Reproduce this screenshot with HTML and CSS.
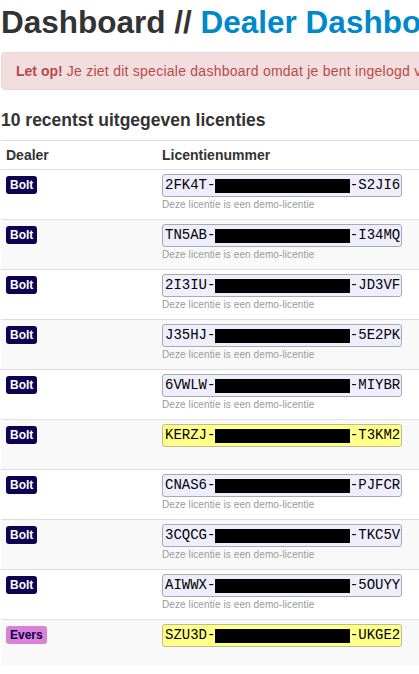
FILE: index.html
```html
<!DOCTYPE html>
<html lang="nl">
  <head>
    <meta charset="UTF-8" />
    <meta name="viewport" content="width=device-width, initial-scale=1.0" />
    <title>Dealer Dashboard</title>
    <link rel="stylesheet" href="styles.css">
  </head>
  <body>
    <div class="container">
      <h2 class="page-title">Dashboard // <span class="sub">Dealer Dashboard</span></h2>

      <div class="alert alert-error">
        <strong>Let op!</strong> Je ziet dit speciale dashboard omdat je bent ingelogd vanuit een dealeraccount.
      </div>

      <h4>10 recentst uitgegeven licenties</h4>

      <table class="table">
        <tr>
          <th class="col-dealer">Dealer</th>
          <th>Licentienummer</th>
        </tr>
        <tr>
          <td><span class="label label-bolt">Bolt</span></td>
          <td>
            <div class="license">2FK4T-<span class="redacted"></span>-S2JI6</div>
            <div class="help">Deze licentie is een demo-licentie</div>
          </td>
        </tr>
        <tr>
          <td><span class="label label-bolt">Bolt</span></td>
          <td>
            <div class="license">TN5AB-<span class="redacted"></span>-I34MQ</div>
            <div class="help">Deze licentie is een demo-licentie</div>
          </td>
        </tr>
        <tr>
          <td><span class="label label-bolt">Bolt</span></td>
          <td>
            <div class="license">2I3IU-<span class="redacted"></span>-JD3VF</div>
            <div class="help">Deze licentie is een demo-licentie</div>
          </td>
        </tr>
        <tr>
          <td><span class="label label-bolt">Bolt</span></td>
          <td>
            <div class="license">J35HJ-<span class="redacted"></span>-5E2PK</div>
            <div class="help">Deze licentie is een demo-licentie</div>
          </td>
        </tr>
        <tr>
          <td><span class="label label-bolt">Bolt</span></td>
          <td>
            <div class="license">6VWLW-<span class="redacted"></span>-MIYBR</div>
            <div class="help">Deze licentie is een demo-licentie</div>
          </td>
        </tr>
        <tr>
          <td><span class="label label-bolt">Bolt</span></td>
          <td>
            <div class="license license-full">KERZJ-<span class="redacted"></span>-T3KM2</div>
            <div class="help"></div>
          </td>
        </tr>
        <tr>
          <td><span class="label label-bolt">Bolt</span></td>
          <td>
            <div class="license">CNAS6-<span class="redacted"></span>-PJFCR</div>
            <div class="help">Deze licentie is een demo-licentie</div>
          </td>
        </tr>
        <tr>
          <td><span class="label label-bolt">Bolt</span></td>
          <td>
            <div class="license">3CQCG-<span class="redacted"></span>-TKC5V</div>
            <div class="help">Deze licentie is een demo-licentie</div>
          </td>
        </tr>
        <tr>
          <td><span class="label label-bolt">Bolt</span></td>
          <td>
            <div class="license">AIWWX-<span class="redacted"></span>-5OUYY</div>
            <div class="help">Deze licentie is een demo-licentie</div>
          </td>
        </tr>
        <tr>
          <td><span class="label label-evers">Evers</span></td>
          <td>
            <div class="license license-full">SZU3D-<span class="redacted"></span>-UKGE2</div>
            <div class="help help-last"></div>
          </td>
        </tr>
      </table>
    </div>
  </body>
</html>
```

FILE: styles.css
```css
html {
  overflow: hidden;
}
body {
  margin: 0;
  font-family: "Liberation Sans", Arial, sans-serif;
  font-size: 14px;
  line-height: 20px;
  color: #333333;
  background: #ffffff;
}
.container {
  width: 940px;
  padding: 2px 0 0 1px;
}
.page-title {
  margin: 0 0 10px;
  font-size: 31.5px;
  line-height: 40px;
  font-weight: bold;
  white-space: nowrap;
}
.page-title .sub {
  color: #0088cc;
}
.alert {
  padding: 8px 35px 8px 14px;
  margin-bottom: 20px;
  border: 1px solid #eed3d7;
  border-radius: 4px;
  white-space: nowrap;
  letter-spacing: 0.25px;
}
.alert strong {
  letter-spacing: 0;
}
.alert-error {
  background-color: #f2dede;
  color: #b94a48;
}
h4 {
  margin: 10px 0;
  font-size: 17.5px;
  line-height: 20px;
  font-weight: bold;
}
.table {
  width: 100%;
  border-collapse: collapse;
  border-spacing: 0;
}
.table th,
.table td {
  padding: 4px 5px;
  text-align: left;
  vertical-align: top;
  border-top: 1px solid #dddddd;
}
.table tr:nth-child(odd) td {
  background-color: #f9f9f9;
}
.col-dealer {
  width: 146px;
}
.label {
  display: inline-block;
  padding: 3px 4px;
  font-size: 12px;
  line-height: 12px;
  font-weight: bold;
  border-radius: 3px;
}
.label-bolt {
  background: #0e0052;
  color: #ffffff;
}
.label-evers {
  background: #d982d6;
  color: #0e0052;
}
.license {
  box-sizing: border-box;
  width: 240px;
  height: 23px;
  padding: 0 2px;
  border: 1px solid #a9a9b4;
  border-radius: 3px;
  background: #eeeefc;
  color: #000000;
  font-family: "Liberation Mono", "Courier New", monospace;
  font-size: 14px;
  line-height: 21px;
  white-space: nowrap;
}
.license-full {
  background: #ffff88;
  border-color: #bcbc94;
}
.redacted {
  display: inline-block;
  width: 16ch;
  height: 14px;
  background: #000000;
  vertical-align: -4px;
}
.help {
  height: 14px;
  padding-bottom: 4px;
  font-size: 10px;
  line-height: 15px;
  letter-spacing: 0.1px;
  color: #999999;
}
.help-last {
  height: 11px;
}
```
